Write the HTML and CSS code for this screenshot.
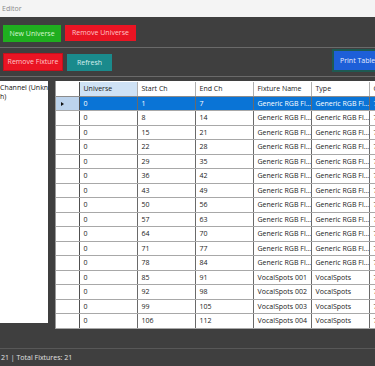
FILE: index.html
```html
<!DOCTYPE html>
<html>
<head>
<meta charset="utf-8">
<link rel="stylesheet" href="styles.css">
</head>
<body>
<div class="window">
  <div class="titlebar">Editor</div>
  <div class="panel panel-universe">
    <button class="btn btn-green">New Universe</button>
    <button class="btn btn-red btn-wide">Remove Universe</button>
  </div>
  <div class="panel panel-fixture">
    <button class="btn btn-red btn-fix">Remove Fixture</button>
    <button class="btn btn-teal">Refresh</button>
    <span class="spacer"></span>
    <button class="btn btn-blue">Print Table</button>
  </div>
  <div class="main">
    <div class="listbox">
      <div class="item">Channel (Unknc</div>
      <div class="item">h)</div>
    </div>
    <div class="gridwrap">
      <table class="grid">
        <colgroup>
          <col class="c-rh"><col class="c"><col class="c"><col class="c"><col class="c"><col class="c"><col class="c-last">
        </colgroup>
        <thead>
          <tr>
            <th class="rh"></th>
            <th class="hl">Universe</th>
            <th>Start Ch</th>
            <th>End Ch</th>
            <th>Fixture Name</th>
            <th>Type</th>
            <th>Channels</th>
          </tr>
        </thead>
        <tbody id="rows">
          <tr class="sel"><td class="rh"><span class="arrow"></span></td><td>0</td><td>1</td><td>7</td><td>Generic RGB Fl...</td><td>Generic RGB Fl...</td><td>7</td></tr>
          <tr><td class="rh"></td><td>0</td><td>8</td><td>14</td><td>Generic RGB Fl...</td><td>Generic RGB Fl...</td><td>7</td></tr>
          <tr><td class="rh"></td><td>0</td><td>15</td><td>21</td><td>Generic RGB Fl...</td><td>Generic RGB Fl...</td><td>7</td></tr>
          <tr><td class="rh"></td><td>0</td><td>22</td><td>28</td><td>Generic RGB Fl...</td><td>Generic RGB Fl...</td><td>7</td></tr>
          <tr><td class="rh"></td><td>0</td><td>29</td><td>35</td><td>Generic RGB Fl...</td><td>Generic RGB Fl...</td><td>7</td></tr>
          <tr><td class="rh"></td><td>0</td><td>36</td><td>42</td><td>Generic RGB Fl...</td><td>Generic RGB Fl...</td><td>7</td></tr>
          <tr><td class="rh"></td><td>0</td><td>43</td><td>49</td><td>Generic RGB Fl...</td><td>Generic RGB Fl...</td><td>7</td></tr>
          <tr><td class="rh"></td><td>0</td><td>50</td><td>56</td><td>Generic RGB Fl...</td><td>Generic RGB Fl...</td><td>7</td></tr>
          <tr><td class="rh"></td><td>0</td><td>57</td><td>63</td><td>Generic RGB Fl...</td><td>Generic RGB Fl...</td><td>7</td></tr>
          <tr><td class="rh"></td><td>0</td><td>64</td><td>70</td><td>Generic RGB Fl...</td><td>Generic RGB Fl...</td><td>7</td></tr>
          <tr><td class="rh"></td><td>0</td><td>71</td><td>77</td><td>Generic RGB Fl...</td><td>Generic RGB Fl...</td><td>7</td></tr>
          <tr><td class="rh"></td><td>0</td><td>78</td><td>84</td><td>Generic RGB Fl...</td><td>Generic RGB Fl...</td><td>7</td></tr>
          <tr><td class="rh"></td><td>0</td><td>85</td><td>91</td><td>VocalSpots 001</td><td>VocalSpots</td><td>7</td></tr>
          <tr><td class="rh"></td><td>0</td><td>92</td><td>98</td><td>VocalSpots 002</td><td>VocalSpots</td><td>7</td></tr>
          <tr><td class="rh"></td><td>0</td><td>99</td><td>105</td><td>VocalSpots 003</td><td>VocalSpots</td><td>7</td></tr>
          <tr><td class="rh"></td><td>0</td><td>106</td><td>112</td><td>VocalSpots 004</td><td>VocalSpots</td><td>7</td></tr>
          <tr><td class="rh"></td><td>0</td><td>113</td><td>119</td><td>VocalSpots 005</td><td>VocalSpots</td><td>7</td></tr>
        </tbody>
      </table>
    </div>
  </div>
  <div class="statusbar">21 | Total Fixtures: 21</div>
</div>
</body>
</html>
```

FILE: styles.css
```css
* { box-sizing: border-box; }
html, body {
  margin: 0;
  padding: 0;
}
body {
  width: 375px;
  height: 366px;
  overflow: hidden;
  background: #3f3f3f;
  font-family: "Open Sans", "Noto Sans", sans-serif;
  font-size: 7px;
}
.window {
  display: flex;
  flex-direction: column;
  height: 366px;
  width: 375px;
  overflow: hidden;
}
.titlebar {
  height: 17px;
  background: #f4f4f4;
  color: #8a8a8a;
  font-size: 7px;
  line-height: 18px;
  padding-left: 2px;
}
.panel {
  display: flex;
  align-items: flex-start;
  border-bottom: 1px solid #6a6a6a;
}
.panel-universe {
  height: 31px;
  padding: 8px 0 0 3px;
  gap: 4px;
}
.panel-fixture {
  height: 29px;
  padding: 5px 0 0 3px;
  gap: 4px;
}
.spacer { flex: 1; }
.btn {
  border: 0;
  margin: 0;
  padding: 0;
  font-family: inherit;
  font-size: 7px;
  height: 16px;
  line-height: 16px;
  text-align: center;
  white-space: nowrap;
  flex-shrink: 0;
}
.btn-green {
  width: 58px;
  height: 17px;
  background: #1fae1f;
  color: #d6f7d0;
}
.btn-red {
  background: #ea1423;
  color: #ffc4c8;
}
.btn-wide { width: 71px; }
.btn-fix {
  width: 60px;
  height: 18px;
  line-height: 16px;
  margin-top: 0;
  border: 1px solid #c40f1c;
}
.btn-teal {
  width: 45px;
  height: 17px;
  line-height: 17px;
  margin-top: 1px;
  background: #1a8a8c;
  color: #d8f0f0;
}
.btn-blue {
  width: 52px;
  height: 23px;
  margin-top: -4px;
  margin-right: -9px;
  background: #1d5fd8;
  color: #e6eeff;
  border: 2px solid #1e5a52;
  line-height: 19px;
  text-align: left;
  padding-left: 6px;
}
.main {
  display: flex;
  margin-top: 4px;
  height: 248px;
  align-items: flex-start;
}
.listbox {
  width: 48px;
  height: 242px;
  background: #ffffff;
  overflow: hidden;
  white-space: nowrap;
  color: #111;
  font-size: 7px;
  line-height: 8.5px;
  padding-top: 3px;
  flex-shrink: 0;
}
.item { overflow: hidden; }
.gridwrap {
  margin-left: 7px;
  flex: 1;
  height: 248px;
  background: #ffffff;
  overflow: hidden;
  border-left: 1px solid #9a9a9a;
  padding-top: 1px;
}
.grid {
  border-collapse: collapse;
  table-layout: fixed;
  width: 350px;
  font-size: 7px;
  color: #1a1a1a;
}
.c-rh { width: 23px; }
.c { width: 58px; }
.c-last { width: 37px; }
.grid th, .grid td {
  height: 14.5px;
  padding: 0 0 0 4px;
  text-align: left;
  white-space: nowrap;
  overflow: hidden;
  font-weight: normal;
  border-right: 1px solid #6a6a6a;
  border-bottom: 1px solid #a8a8a8;
}
.grid th {
  height: 14px;
  color: #222;
  border-bottom: 1px solid #8c8c8c;
  border-right: 1px solid #b0b0b0;
}
.grid th.hl { background: #cfe2f5; }
.grid td.rh, .grid th.rh {
  padding: 0;
  border-right: 1px solid #505050;
}
.grid tr.sel td {
  background: #0a74d6;
  color: #ffffff;
}
.grid tr.sel td.rh {
  background: #bcd3ec;
}
.arrow {
  display: inline-block;
  width: 0;
  height: 0;
  margin-left: 5px;
  border-top: 2.5px solid transparent;
  border-bottom: 2.5px solid transparent;
  border-left: 3px solid #111;
  vertical-align: middle;
}
.statusbar {
  margin-top: auto;
  height: 18px;
  border-top: 1px solid #585858;
  color: #e2e2e2;
  font-size: 7px;
  line-height: 17px;
  padding-left: 1px;
}
```
